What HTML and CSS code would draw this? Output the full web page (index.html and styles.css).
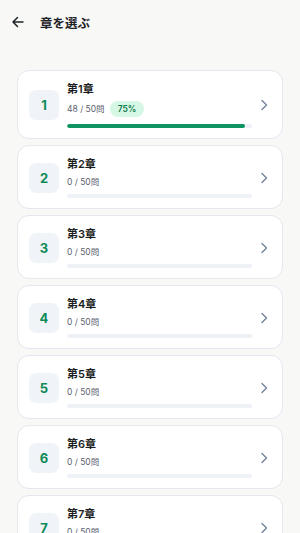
FILE: index.html
```html
<!DOCTYPE html>
<html lang="ja">
<head>
    <meta charset="UTF-8">
    <meta name="viewport" content="width=device-width, initial-scale=1.0">
    <title>章を選ぶ</title>
    <link rel="stylesheet" href="styles.css">
</head>
<body>
    <div class="topo">
        <svg class="voltar" width="14" height="14" viewBox="0 0 14 14" fill="none" stroke="#1f2328" stroke-width="1.5" stroke-linecap="round" stroke-linejoin="round">
            <path d="M12 7H2M6.5 2.5L2 7l4.5 4.5"/>
        </svg>
        <h1>章を選ぶ</h1>
    </div>

    <div class="lista">
        <div class="card feito">
            <div class="numero">1</div>
            <div class="info">
                <p class="titulo">第1章</p>
                <div class="meta"><span>48 / 50問</span><span class="selo">75%</span></div>
                <div class="barra"><div class="preenche" style="width: 96%"></div></div>
            </div>
            <svg class="seta" width="12" height="12" viewBox="0 0 12 12" fill="none" stroke="#74819a" stroke-width="1.4" stroke-linecap="round" stroke-linejoin="round"><path d="M4 1.5L8.5 6 4 10.5"/></svg>
        </div>
        <div class="card">
            <div class="numero">2</div>
            <div class="info">
                <p class="titulo">第2章</p>
                <div class="meta"><span>0 / 50問</span></div>
                <div class="barra"></div>
            </div>
            <svg class="seta" width="12" height="12" viewBox="0 0 12 12" fill="none" stroke="#74819a" stroke-width="1.4" stroke-linecap="round" stroke-linejoin="round"><path d="M4 1.5L8.5 6 4 10.5"/></svg>
        </div>
        <div class="card">
            <div class="numero">3</div>
            <div class="info">
                <p class="titulo">第3章</p>
                <div class="meta"><span>0 / 50問</span></div>
                <div class="barra"></div>
            </div>
            <svg class="seta" width="12" height="12" viewBox="0 0 12 12" fill="none" stroke="#74819a" stroke-width="1.4" stroke-linecap="round" stroke-linejoin="round"><path d="M4 1.5L8.5 6 4 10.5"/></svg>
        </div>
        <div class="card">
            <div class="numero">4</div>
            <div class="info">
                <p class="titulo">第4章</p>
                <div class="meta"><span>0 / 50問</span></div>
                <div class="barra"></div>
            </div>
            <svg class="seta" width="12" height="12" viewBox="0 0 12 12" fill="none" stroke="#74819a" stroke-width="1.4" stroke-linecap="round" stroke-linejoin="round"><path d="M4 1.5L8.5 6 4 10.5"/></svg>
        </div>
        <div class="card">
            <div class="numero">5</div>
            <div class="info">
                <p class="titulo">第5章</p>
                <div class="meta"><span>0 / 50問</span></div>
                <div class="barra"></div>
            </div>
            <svg class="seta" width="12" height="12" viewBox="0 0 12 12" fill="none" stroke="#74819a" stroke-width="1.4" stroke-linecap="round" stroke-linejoin="round"><path d="M4 1.5L8.5 6 4 10.5"/></svg>
        </div>
        <div class="card">
            <div class="numero">6</div>
            <div class="info">
                <p class="titulo">第6章</p>
                <div class="meta"><span>0 / 50問</span></div>
                <div class="barra"></div>
            </div>
            <svg class="seta" width="12" height="12" viewBox="0 0 12 12" fill="none" stroke="#74819a" stroke-width="1.4" stroke-linecap="round" stroke-linejoin="round"><path d="M4 1.5L8.5 6 4 10.5"/></svg>
        </div>
        <div class="card">
            <div class="numero">7</div>
            <div class="info">
                <p class="titulo">第7章</p>
                <div class="meta"><span>0 / 50問</span></div>
                <div class="barra"></div>
            </div>
            <svg class="seta" width="12" height="12" viewBox="0 0 12 12" fill="none" stroke="#74819a" stroke-width="1.4" stroke-linecap="round" stroke-linejoin="round"><path d="M4 1.5L8.5 6 4 10.5"/></svg>
        </div>
    </div>
</body>
</html>
```

FILE: styles.css
```css
* {
    margin: 0;
    padding: 0;
    box-sizing: border-box;
}
body {
    background-color: #f8f8f7;
    font-family: "Inter", "Noto Sans CJK JP", sans-serif;
    color: #1f2328;
    overflow: hidden;
}
.topo {
    display: flex;
    align-items: center;
    height: 44px;
    padding-left: 11px;
}
.voltar {
    display: block;
}
.topo h1 {
    font-size: 12.5px;
    font-weight: 700;
    margin-left: 15px;
}
.lista {
    display: flex;
    flex-direction: column;
    gap: 6px;
    padding: 26px 17px 0;
}
.card {
    display: flex;
    align-items: center;
    background-color: white;
    border: 1px solid #e4e7ee;
    border-radius: 12px;
    padding: 11px 12px 10px 11px;
}
.numero {
    width: 30px;
    height: 30px;
    flex-shrink: 0;
    display: flex;
    align-items: center;
    justify-content: center;
    background-color: #f0f3f8;
    border-radius: 7px;
    color: #0f8a57;
    font-size: 13px;
    font-weight: 700;
}
.info {
    flex: 1;
    margin-left: 8px;
    margin-right: 6px;
}
.titulo {
    font-size: 11px;
    font-weight: 600;
    line-height: 15px;
    color: #1a1d21;
}
.meta {
    display: flex;
    align-items: center;
    gap: 5px;
    margin-top: 4px;
    font-size: 8.5px;
    line-height: 13px;
    color: #5b6270;
}
.selo {
    background-color: #d5f7e4;
    color: #0f7a4e;
    font-weight: 600;
    font-size: 8.5px;
    line-height: 16px;
    padding: 0 8px;
    border-radius: 8px;
}
.barra {
    height: 4px;
    margin-top: 5px;
    background-color: #eef1f6;
    border-radius: 2px;
    overflow: hidden;
}
.feito .barra {
    margin-top: 7px;
}
.preenche {
    height: 100%;
    background-color: #0e9461;
    border-radius: 2px;
}
.seta {
    display: block;
    flex-shrink: 0;
}
```
